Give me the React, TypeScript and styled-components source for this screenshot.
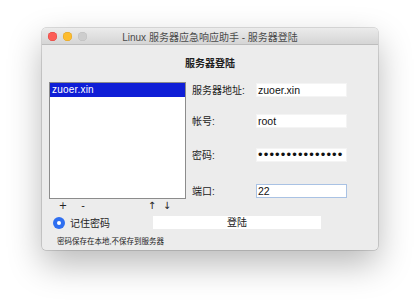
import React from "react";
import styled, { createGlobalStyle } from "styled-components";

const Global = createGlobalStyle`
  html, body { margin: 0; padding: 0; background: #ffffff; }
  body { font-family: "Liberation Sans", "Noto Sans CJK SC", sans-serif; }
`;

const CJK = `"Liberation Sans", "Noto Sans CJK SC", sans-serif`;

const Page = styled.div`
  width: 420px;
  height: 308px;
  box-sizing: border-box;
  padding: 28px 42px 0 42px;
`;

const Window = styled.div`
  width: 336px;
  height: 222px;
  border-radius: 4px;
  overflow: hidden;
  background: #ececec;
  box-shadow: 0 14px 34px rgba(0, 0, 0, 0.28), 0 0 0 0.5px rgba(0, 0, 0, 0.25);
  display: flex;
  flex-direction: column;
`;

const TitleBar = styled.div`
  height: 16px;
  flex: none;
  display: grid;
  grid-template-columns: 1fr auto 1fr;
  align-items: center;
  background: linear-gradient(#ebebeb, #d5d5d5);
  border-bottom: 1px solid #bdbdbd;
  padding: 0 6px;
`;

const Lights = styled.div`
  display: flex;
  gap: 6px;
  align-items: center;
`;

const Light = styled.span<{ $c: string; $b: string }>`
  width: 9px;
  height: 9px;
  border-radius: 50%;
  background: ${(p) => p.$c};
  box-shadow: inset 0 0 0 0.5px ${(p) => p.$b};
`;

const Title = styled.div`
  font-family: ${CJK};
  font-size: 10px;
  color: #4b4b4b;
  white-space: nowrap;
`;

const Body = styled.div`
  flex: 1;
  display: flex;
  flex-direction: column;
  padding: 12px 0 0 7px;
`;

const Heading = styled.div`
  font-family: ${CJK};
  font-size: 10px;
  line-height: 14px;
  font-weight: 600;
  color: #1e1e1e;
  text-align: center;
  margin-left: -7px;
`;

const Main = styled.div`
  display: flex;
  margin-top: 11px;
`;

const ListCol = styled.div`
  width: 137px;
  display: flex;
  flex-direction: column;
`;

const ListBox = styled.div`
  height: 117px;
  box-sizing: border-box;
  background: #ffffff;
  border: 1px solid #8c8c8c;
`;

const ListItem = styled.div<{ $selected?: boolean }>`
  height: 14px;
  line-height: 14px;
  padding-left: 2px;
  font-family: "Liberation Sans", sans-serif;
  font-size: 10px;
  letter-spacing: 0.2px;
  color: ${(p) => (p.$selected ? "#ffffff" : "#111")};
  background: ${(p) => (p.$selected ? "#0f1ed6" : "transparent")};
`;

const ListTools = styled.div`
  height: 12px;
  margin-top: 1px;
  display: flex;
  align-items: center;
`;

const Tool = styled.span<{ $x: number }>`
  width: 10px;
  margin-left: ${(p) => p.$x}px;
  text-align: center;
  font-family: "DejaVu Sans", sans-serif;
  font-size: 10px;
  line-height: 12px;
  color: #222;
`;

const Form = styled.div`
  margin-left: 6px;
  display: flex;
  flex-direction: column;
`;

const FieldRow = styled.div<{ $top: number }>`
  display: grid;
  grid-template-columns: 64px 91px;
  align-items: center;
  height: 14px;
  margin-top: ${(p) => p.$top}px;
`;

const Label = styled.span`
  font-family: ${CJK};
  font-size: 10px;
  color: #222;
  white-space: nowrap;
`;

const Field = styled.div<{ $focus?: boolean }>`
  height: 14px;
  box-sizing: border-box;
  background: #ffffff;
  border: 1px solid ${(p) => (p.$focus ? "#a9c2e4" : "#f4f4f4")};
  padding-left: 1px;
  font-family: "Liberation Sans", sans-serif;
  font-size: 10.5px;
  line-height: 12px;
  color: #111;
  white-space: nowrap;
  overflow: hidden;
`;

const Dots = styled.span`
  font-size: 13px;
  letter-spacing: 1.15px;
  line-height: 12px;
`;

const OptionsRow = styled.div`
  display: flex;
  align-items: center;
  height: 13px;
  margin-top: 4px;
`;

const Radio = styled.span`
  width: 12px;
  height: 12px;
  margin-left: 4px;
  border-radius: 50%;
  background: #2f6ff0;
  display: flex;
  align-items: center;
  justify-content: center;
  &::after {
    content: "";
    width: 4px;
    height: 4px;
    border-radius: 50%;
    background: #ffffff;
  }
`;

const RadioLabel = styled.span`
  margin-left: 5px;
  font-family: ${CJK};
  font-size: 10px;
  color: #222;
`;

const LoginButton = styled.div`
  margin-left: 43px;
  width: 168px;
  height: 13px;
  background: #ffffff;
  font-family: ${CJK};
  font-size: 10px;
  line-height: 13px;
  color: #222;
  text-align: center;
`;

const Note = styled.div`
  margin-top: 8px;
  margin-left: 8px;
  font-family: ${CJK};
  font-size: 7.5px;
  line-height: 10px;
  color: #222;
`;

export default function App() {
  return (
    <Page>
      <Global />
      <Window>
        <TitleBar>
          <Lights>
            <Light $c="#fc5d57" $b="#e0443e" />
            <Light $c="#fdbc2e" $b="#dea123" />
            <Light $c="#cdcdcd" $b="#bdbdbd" />
          </Lights>
          <Title>Linux 服务器应急响应助手 - 服务器登陆</Title>
          <span />
        </TitleBar>
        <Body>
          <Heading>服务器登陆</Heading>
          <Main>
            <ListCol>
              <ListBox>
                <ListItem $selected>zuoer.xin</ListItem>
              </ListBox>
              <ListTools>
                <Tool $x={9}>+</Tool>
                <Tool $x={10}>-</Tool>
                <Tool $x={59}>↑</Tool>
                <Tool $x={5}>↓</Tool>
              </ListTools>
            </ListCol>
            <Form>
              <FieldRow $top={0}>
                <Label>服务器地址:</Label>
                <Field>zuoer.xin</Field>
              </FieldRow>
              <FieldRow $top={17}>
                <Label>帐号:</Label>
                <Field>root</Field>
              </FieldRow>
              <FieldRow $top={20}>
                <Label>密码:</Label>
                <Field>
                  <Dots>•••••••••••••••</Dots>
                </Field>
              </FieldRow>
              <FieldRow $top={22}>
                <Label>端口:</Label>
                <Field $focus>22</Field>
              </FieldRow>
            </Form>
          </Main>
          <OptionsRow>
            <Radio />
            <RadioLabel>记住密码</RadioLabel>
            <LoginButton>登陆</LoginButton>
          </OptionsRow>
          <Note>密码保存在本地,不保存到服务器</Note>
        </Body>
      </Window>
    </Page>
  );
}
